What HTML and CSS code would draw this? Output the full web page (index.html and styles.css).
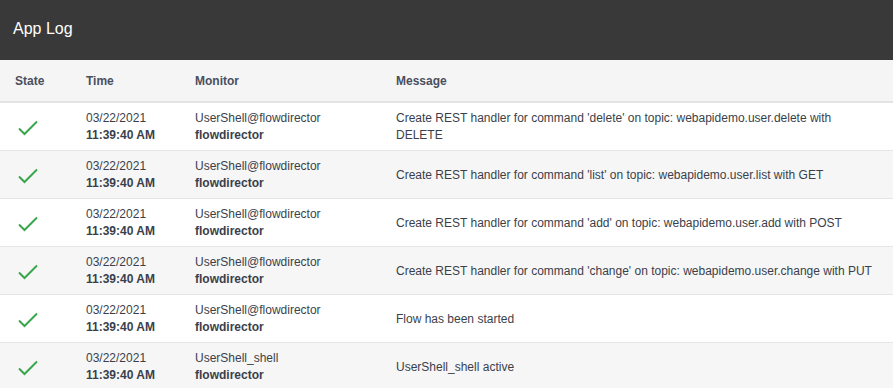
FILE: index.html
```html
<!DOCTYPE html>
<html>
<head>
<meta charset="utf-8">
<link rel="stylesheet" href="styles.css">
</head>
<body>
<header class="topbar">App Log</header>
<table class="log">
  <thead>
    <tr><th class="c-state">State</th><th class="c-time">Time</th><th class="c-mon">Monitor</th><th>Message</th></tr>
  </thead>
  <tbody>
    <tr>
      <td><svg class="ok" viewBox="0 0 20 16" width="20" height="16"><path d="M1 8.5 L6.5 14 L19 1.5" fill="none" stroke="#3aa64c" stroke-width="2"/></svg></td>
      <td>03/22/2021<br><b>11:39:40 AM</b></td>
      <td>UserShell@flowdirector<br><b>flowdirector</b></td>
      <td>Create REST handler for command 'delete' on topic: webapidemo.user.delete with DELETE</td>
    </tr>
    <tr>
      <td><svg class="ok" viewBox="0 0 20 16" width="20" height="16"><path d="M1 8.5 L6.5 14 L19 1.5" fill="none" stroke="#3aa64c" stroke-width="2"/></svg></td>
      <td>03/22/2021<br><b>11:39:40 AM</b></td>
      <td>UserShell@flowdirector<br><b>flowdirector</b></td>
      <td>Create REST handler for command 'list' on topic: webapidemo.user.list with GET</td>
    </tr>
    <tr>
      <td><svg class="ok" viewBox="0 0 20 16" width="20" height="16"><path d="M1 8.5 L6.5 14 L19 1.5" fill="none" stroke="#3aa64c" stroke-width="2"/></svg></td>
      <td>03/22/2021<br><b>11:39:40 AM</b></td>
      <td>UserShell@flowdirector<br><b>flowdirector</b></td>
      <td>Create REST handler for command 'add' on topic: webapidemo.user.add with POST</td>
    </tr>
    <tr>
      <td><svg class="ok" viewBox="0 0 20 16" width="20" height="16"><path d="M1 8.5 L6.5 14 L19 1.5" fill="none" stroke="#3aa64c" stroke-width="2"/></svg></td>
      <td>03/22/2021<br><b>11:39:40 AM</b></td>
      <td>UserShell@flowdirector<br><b>flowdirector</b></td>
      <td>Create REST handler for command 'change' on topic: webapidemo.user.change with PUT</td>
    </tr>
    <tr>
      <td><svg class="ok" viewBox="0 0 20 16" width="20" height="16"><path d="M1 8.5 L6.5 14 L19 1.5" fill="none" stroke="#3aa64c" stroke-width="2"/></svg></td>
      <td>03/22/2021<br><b>11:39:40 AM</b></td>
      <td>UserShell@flowdirector<br><b>flowdirector</b></td>
      <td>Flow has been started</td>
    </tr>
    <tr>
      <td><svg class="ok" viewBox="0 0 20 16" width="20" height="16"><path d="M1 8.5 L6.5 14 L19 1.5" fill="none" stroke="#3aa64c" stroke-width="2"/></svg></td>
      <td>03/22/2021<br><b>11:39:40 AM</b></td>
      <td>UserShell_shell<br><b>flowdirector</b></td>
      <td>UserShell_shell active</td>
    </tr>
  </tbody>
</table>
</body>
</html>
```
FILE: styles.css
```css
html, body {
  margin: 0;
  padding: 0;
  background: #fff;
  font-family: "Liberation Sans", Arial, sans-serif;
}
.topbar {
  display: block;
  height: 60px;
  background: #393939;
  color: #fff;
  font-size: 16px;
  line-height: 58px;
  padding-left: 13px;
}
.log {
  width: 100%;
  border-collapse: collapse;
  font-size: 12px;
  color: #3a3f4b;
}
.log th {
  text-align: left;
  font-weight: bold;
  color: #4a4f5e;
  background: #f5f5f5;
  height: 41px;
  padding: 0 0 0 15px;
  border-bottom: 2px solid #e3e3e3;
}
.log th.c-state { width: 56px; }
.log th.c-time { width: 94px; }
.log th.c-mon { width: 186px; }
.log td {
  vertical-align: middle;
  padding: 7px 15px 6px 15px;
  line-height: 17px;
  height: 34px;
  border-bottom: 1px solid #e6e6e6;
}
.log tbody tr:nth-child(even) td { background: #f6f6f6; }
.log td b { font-weight: bold; color: #3a3f4b; }
.ok { display: block; margin-left: 3px; margin-top: 2px; }
```
